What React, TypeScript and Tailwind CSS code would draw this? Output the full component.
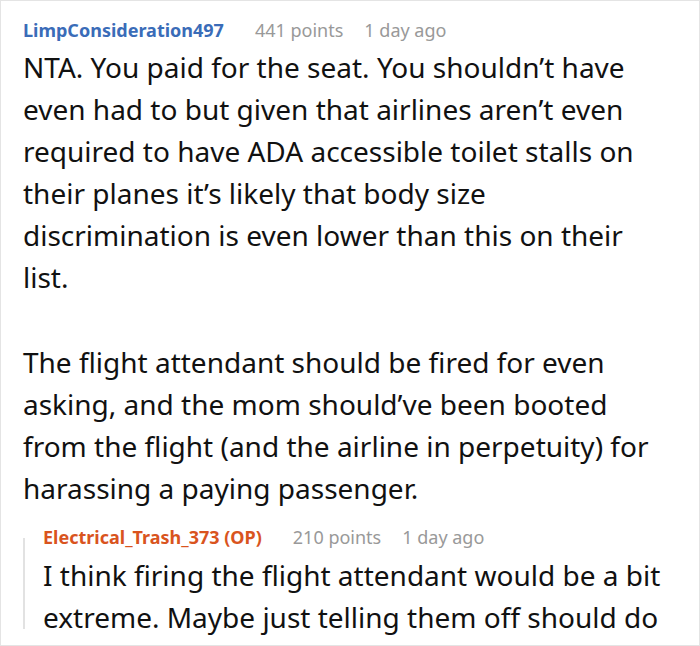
const font = { fontFamily: '"Noto Sans", "Open Sans", sans-serif' };

const Meta = ({ name, color, points, time }: { name: string; color: string; points: string; time: string }) => (
  <div className="flex items-baseline text-[18px] leading-[28px]">
    <span className={`font-bold ${color}`}>{name}</span>
    <span className="ml-[31px] text-[#999999]">{points}</span>
    <span className="ml-[21px] text-[#999999]">{time}</span>
  </div>
);

export default function App() {
  return (
    <div
      className="w-[700px] h-[646px] overflow-hidden bg-white border border-[#e4e4e4] pt-[15px] pl-[22px] pr-[40px] text-[#111111]"
      style={font}
    >
      <Meta name="LimpConsideration497" color="text-[#3a6cb8]" points="441 points" time="1 day ago" />
      <div className="mt-[2px] text-[28px] leading-[42px]">
        <p>
          NTA. You paid for the seat. You shouldn’t have even had to but given that airlines aren’t even required to
          have ADA accessible toilet stalls on their planes it’s likely that body size discrimination is even lower than
          this on their list.
        </p>
        <p className="mt-[43px]">
          The flight attendant should be fired for even asking, and the mom should’ve been booted from the flight (and
          the airline in perpetuity) for harassing a paying passenger.
        </p>
      </div>

      {/* reply */}
      <div className="relative mt-[14px] pl-[20px] -mr-[20px]">
        <span className="absolute left-0 top-[15px] bottom-[9px] w-[2px] bg-[#e2e2e2]" />
        <Meta name="Electrical_Trash_373 (OP)" color="text-[#d9541e]" points="210 points" time="1 day ago" />
        <p className="mt-[3px] text-[28px] leading-[42px]">
          I think firing the flight attendant would be a bit extreme. Maybe just telling them off should do
        </p>
      </div>
    </div>
  );
}
